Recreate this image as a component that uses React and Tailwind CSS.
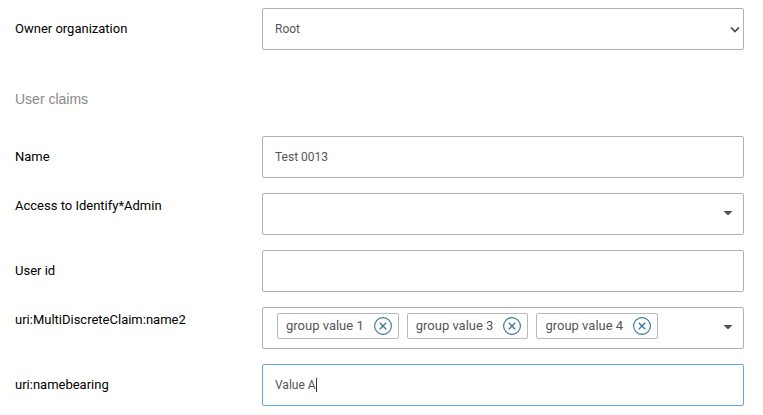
import React, { useState } from 'react';

const fieldClass =
  'block h-[42px] w-full rounded-xs border border-[#b0b0b0] bg-white px-3 text-xs text-[#555] outline-none';

const CaretDown = () => (
  <svg
    className="pointer-events-none absolute right-3 top-[18px]"
    width="8"
    height="4"
    viewBox="0 0 8 4"
    aria-hidden="true"
  >
    <path d="M0 0h8v.6L4.6 4H3.4L0 .6z" fill="#555" />
  </svg>
);

const ChevronDown = () => (
  <svg
    className="pointer-events-none absolute right-1 top-[18px]"
    width="10"
    height="7"
    viewBox="0 0 10 7"
    fill="none"
    aria-hidden="true"
  >
    <path d="M1 1.5l4 4 4-4" stroke="#444" strokeWidth="1.6" />
  </svg>
);

const RemoveIcon = () => (
  <svg width="18" height="18" viewBox="0 0 18 18" fill="none" stroke="#3b7496" aria-hidden="true">
    <circle cx="9" cy="9" r="8.4" strokeWidth="1.1" />
    <path d="M5.8 5.8l6.4 6.4M12.2 5.8l-6.4 6.4" strokeWidth="1.3" />
  </svg>
);

const Row = ({ id, label, top, children }) => (
  <div className={`flex ${top ? 'items-start' : 'items-center'}`}>
    <label
      htmlFor={id}
      className={`w-[247px] shrink-0 text-[13px] leading-4 text-black ${top ? 'pt-[5px]' : ''}`}
    >
      {label}
    </label>
    <div className="relative min-w-0 flex-1">{children}</div>
  </div>
);

const App = () => {
  const [name, setName] = useState('Test 0013');
  const [userId, setUserId] = useState('');
  const [bearing, setBearing] = useState('Value A');
  const [groups, setGroups] = useState(['group value 1', 'group value 3', 'group value 4']);

  return (
    <form className="bg-white pb-2 pl-[15px] pr-[19px] pt-2 font-['Roboto',sans-serif]">
      <Row id="owner" label="Owner organization">
        <select id="owner" className={`${fieldClass} appearance-none`}>
          <option>Root</option>
        </select>
        <ChevronDown />
      </Row>

      <h2 className="pb-[27px] pt-[39px] font-['Liberation_Sans',sans-serif] text-sm leading-5 text-[#888]">
        User claims
      </h2>

      <div className="flex flex-col gap-[15px]">
        <Row id="name" label="Name">
          <input id="name" className={fieldClass} value={name} onChange={(e) => setName(e.target.value)} />
        </Row>

        <Row id="access" label="Access to Identify*Admin" top>
          <select id="access" className={`${fieldClass} appearance-none`}>
            <option value=""></option>
          </select>
          <CaretDown />
        </Row>

        <Row id="userId" label="User id">
          <input id="userId" className={fieldClass} value={userId} onChange={(e) => setUserId(e.target.value)} />
        </Row>

        <Row id="groups" label="uri:MultiDiscreteClaim:name2" top>
          <div className="flex min-h-[42px] items-start gap-2 rounded-xs border border-[#b0b0b0] bg-white py-[5px] pl-[14px] pr-8">
            {groups.map((group) => (
              <span
                key={group}
                className="flex h-[26px] shrink-0 items-center gap-[10px] rounded-xs border border-[#b9b9b9] pl-2 pr-[6px] text-[13px] text-[#555]"
              >
                {group}
                <button
                  type="button"
                  aria-label={`Remove ${group}`}
                  onClick={() => setGroups(groups.filter((g) => g !== group))}
                >
                  <RemoveIcon />
                </button>
              </span>
            ))}
            <input id="groups" className="h-[26px] w-0 min-w-0 flex-1 text-xs outline-none" />
          </div>
          <CaretDown />
        </Row>

        <Row id="bearing" label="uri:namebearing">
          <div className="flex h-[42px] items-center rounded-xs border border-[#62a8dc] bg-white px-3 text-xs text-[#555]">
            <input
              id="bearing"
              className="field-sizing-content caret-transparent outline-none"
              value={bearing}
              onChange={(e) => setBearing(e.target.value)}
            />
            <span className="h-[14px] w-px bg-[#333]" />
          </div>
        </Row>
      </div>
    </form>
  );
};

export default App;
